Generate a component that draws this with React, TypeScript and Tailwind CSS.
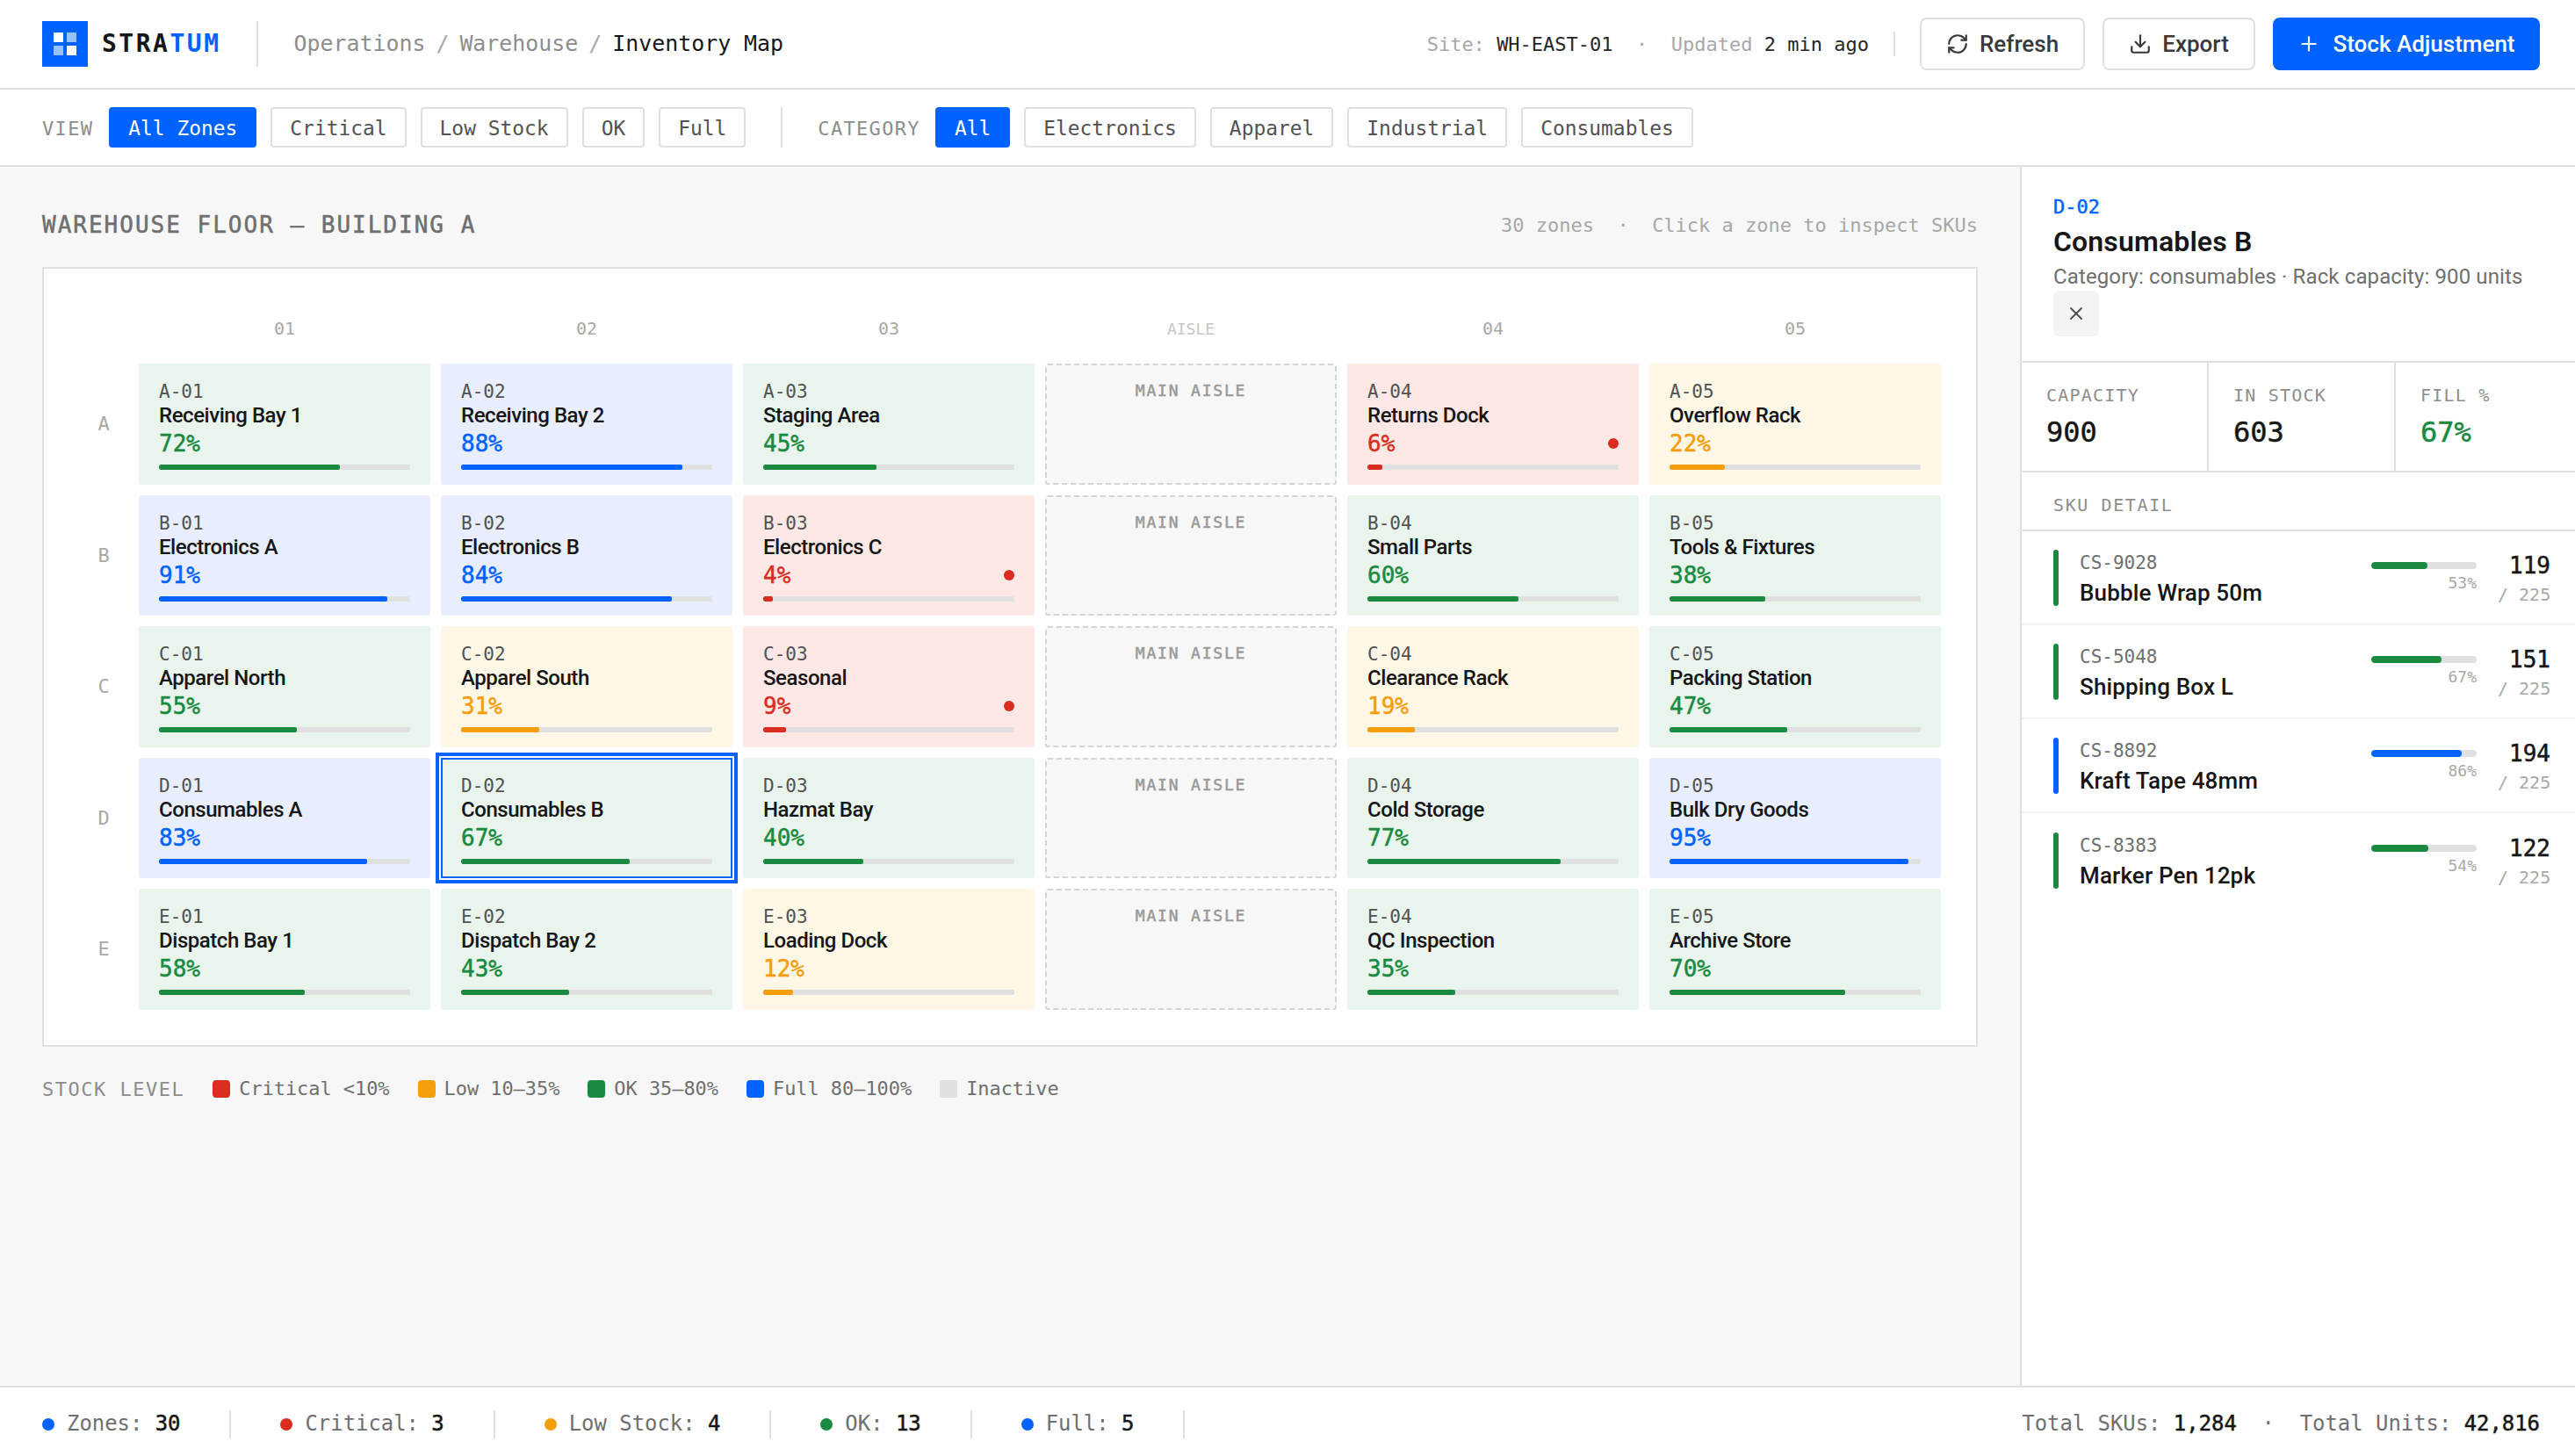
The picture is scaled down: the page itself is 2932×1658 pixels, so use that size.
import { RefreshCw, Download, Plus, X } from 'lucide-react';

type Level = 'critical' | 'low' | 'ok' | 'full';

const levels: Record<Level, { bg: string; text: string; bar: string }> = {
  critical: { bg: 'bg-[#fde8e6]', text: 'text-[#d92d20]', bar: 'bg-[#d92d20]' },
  low: { bg: 'bg-[#fff7e6]', text: 'text-[#f59e0b]', bar: 'bg-[#f59e0b]' },
  ok: { bg: 'bg-[#e8f4ec]', text: 'text-[#1a8a40]', bar: 'bg-[#1a8a40]' },
  full: { bg: 'bg-[#e8eefd]', text: 'text-[#0062ff]', bar: 'bg-[#0062ff]' },
};

const mono = "font-['DejaVu_Sans_Mono',monospace]";
// DejaVu has no medium cut, so thicken the regular one a little
const monoSemi = "font-['DejaVu_Sans_Mono',monospace] [-webkit-text-stroke:0.5px_currentColor]";
const sans = "font-['Roboto',sans-serif]";

const rows: { label: string; zones: [string, number, Level][] }[] = [
  { label: 'A', zones: [['Receiving Bay 1', 72, 'ok'], ['Receiving Bay 2', 88, 'full'], ['Staging Area', 45, 'ok'], ['Returns Dock', 6, 'critical'], ['Overflow Rack', 22, 'low']] },
  { label: 'B', zones: [['Electronics A', 91, 'full'], ['Electronics B', 84, 'full'], ['Electronics C', 4, 'critical'], ['Small Parts', 60, 'ok'], ['Tools & Fixtures', 38, 'ok']] },
  { label: 'C', zones: [['Apparel North', 55, 'ok'], ['Apparel South', 31, 'low'], ['Seasonal', 9, 'critical'], ['Clearance Rack', 19, 'low'], ['Packing Station', 47, 'ok']] },
  { label: 'D', zones: [['Consumables A', 83, 'full'], ['Consumables B', 67, 'ok'], ['Hazmat Bay', 40, 'ok'], ['Cold Storage', 77, 'ok'], ['Bulk Dry Goods', 95, 'full']] },
  { label: 'E', zones: [['Dispatch Bay 1', 58, 'ok'], ['Dispatch Bay 2', 43, 'ok'], ['Loading Dock', 12, 'low'], ['QC Inspection', 35, 'ok'], ['Archive Store', 70, 'ok']] },
];

const skus: [string, string, number, number, Level][] = [
  ['CS-9028', 'Bubble Wrap 50m', 53, 119, 'ok'],
  ['CS-5048', 'Shipping Box L', 67, 151, 'ok'],
  ['CS-8892', 'Kraft Tape 48mm', 86, 194, 'full'],
  ['CS-8383', 'Marker Pen 12pk', 54, 122, 'ok'],
];

function Chip({ label, active }: { label: string; active?: boolean }) {
  return (
    <button
      className={`h-[46px] px-5 pt-[2px] border-2 rounded-[4px] text-[22.9px] ${
        active ? 'bg-[#0062ff] border-[#0062ff] text-white' : 'bg-white border-[#e0e0e0] text-[#525252]'
      }`}
    >
      {label}
    </button>
  );
}

function Zone({ code, name, pct, level }: { code: string; name: string; pct: number; level: Level }) {
  const selected = code === 'D-02';
  return (
    <div
      className={`h-[137.5px] flex flex-col ${levels[level].bg} ${
        selected
          ? 'relative z-10 border-2 border-[#0062ff] px-[21px] pt-[18px] shadow-[0_0_0_2px_#fff,0_0_0_6px_#0062ff]'
          : 'px-[23px] pt-[20px] rounded-[3px]'
      }`}
    >
      <div className={`${mono} text-[21px] leading-[25px] text-[#525252]`}>{code}</div>
      <div className={`${sans} text-[24px] leading-[28px] tracking-[-0.45px] font-medium text-[#161616] whitespace-nowrap`}>{name}</div>
      <div className="mt-[2px] h-[32px] flex items-center justify-between">
        <span className={`${monoSemi} text-[26px] leading-[32px] ${levels[level].text}`}>{pct}%</span>
        {level === 'critical' && <span className="w-3 h-3 rounded-full bg-[#d92d20]" />}
      </div>
      <div className="mt-2 h-[6px] rounded-[2px] bg-[#e0e0e0] overflow-hidden">
        <div className={`h-full rounded-[2px] ${levels[level].bar}`} style={{ width: `${pct}%` }} />
      </div>
    </div>
  );
}

function Aisle() {
  return (
    <div className={`${monoSemi} h-[137.5px] pt-[16px] border-2 border-dashed border-[#d4d4d4] bg-[#f7f7f7] rounded-[3px] text-center text-[18px] leading-[26px] tracking-[1.8px] text-[#999999]`}>
      MAIN AISLE
    </div>
  );
}

function Legend({ swatch, label }: { swatch: string; label: string }) {
  return (
    <div className="flex items-center gap-[10px] text-[21.9px] text-[#6f6f6f]">
      <span className={`w-5 h-5 rounded-[4px] ${swatch}`} />
      <span>{label}</span>
    </div>
  );
}

function FootStat({ dot, label, value }: { dot: string; label: string; value: number }) {
  return (
    <div className="flex items-center">
      <span className={`w-[14px] h-[14px] rounded-full mr-[14px] ${dot}`} />
      <span className="text-[#6f6f6f] whitespace-pre">{label}: </span>
      <span className={`${monoSemi} text-[#161616]`}>{value}</span>
      <span className="w-[2px] h-8 bg-[#e0e0e0] mx-[56px]" />
    </div>
  );
}

export default function App() {
  return (
    <div className={`h-screen w-full flex flex-col overflow-hidden bg-white ${sans} text-[#161616]`}>
      <header className="h-[102px] flex-none flex items-center border-b-2 border-[#e0e0e0] pl-12 pr-10">
        <div className="w-[52px] h-[52px] bg-[#0062ff] flex items-center justify-center">
          <svg width="26" height="26" viewBox="0 0 26 26">
            <rect x="0" y="0" width="11" height="11" fill="#fff" />
            <rect x="15" y="0" width="11" height="11" fill="#fff" fillOpacity="0.6" />
            <rect x="0" y="15" width="11" height="11" fill="#fff" fillOpacity="0.6" />
            <rect x="15" y="15" width="11" height="11" fill="#fff" />
          </svg>
        </div>
        <div className={`${mono} ml-[16px] text-[28px] font-bold tracking-[2.5px]`}>
          STRA<span className="text-[#0062ff]">TUM</span>
        </div>
        <div className="w-[2px] h-[52px] bg-[#e0e0e0] ml-10 mr-[41px]" />
        <div className={`${mono} flex gap-3 text-[24.9px] text-[#8d8d8d]`}>
          <span>Operations</span>
          <span className="text-[#a8a8a8]">/</span>
          <span>Warehouse</span>
          <span className="text-[#a8a8a8]">/</span>
          <span className="text-[#161616]">Inventory Map</span>
        </div>
        <div className={`${mono} ml-auto text-[22px] text-[#a8a8a8] whitespace-pre`}>
          Site: <span className="text-[#262626]">WH-EAST-01</span>
          {'  ·  '}Updated <span className="text-[#262626]">2 min ago</span>
        </div>
        <div className="w-[2px] h-7 bg-[#e0e0e0] ml-7 mr-7" />
        <div className="flex gap-5">
          <button className="h-[60px] w-[188px] flex items-center justify-center gap-[12px] border-2 border-[#e0e0e0] rounded-lg text-[26px] font-medium text-[#393939]">
            <RefreshCw size={26} strokeWidth={2} />
            Refresh
          </button>
          <button className="h-[60px] w-[174px] flex items-center justify-center gap-[12px] border-2 border-[#e0e0e0] rounded-lg text-[26px] font-medium text-[#393939]">
            <Download size={26} strokeWidth={2} />
            Export
          </button>
          <button className="h-[60px] w-[304px] flex items-center justify-center gap-[14px] bg-[#0062ff] rounded-lg text-[26px] font-medium text-white">
            <Plus size={26} strokeWidth={2} />
            Stock Adjustment
          </button>
        </div>
      </header>

      <div className={`${mono} h-[88px] flex-none flex items-center border-b-2 border-[#e0e0e0] pl-12`}>
        <span className="mt-[2px] text-[22px] tracking-[1.32px] text-[#8d8d8d] mr-[18px]">VIEW</span>
        <div className="flex gap-4">
          <Chip label="All Zones" active />
          <Chip label="Critical" />
          <Chip label="Low Stock" />
          <Chip label="OK" />
          <Chip label="Full" />
        </div>
        <div className="w-[2px] h-[46px] bg-[#e0e0e0] mx-10" />
        <span className="mt-[2px] text-[22px] tracking-[1.32px] text-[#8d8d8d] mr-[17px]">CATEGORY</span>
        <div className="flex gap-4">
          <Chip label="All" active />
          <Chip label="Electronics" />
          <Chip label="Apparel" />
          <Chip label="Industrial" />
          <Chip label="Consumables" />
        </div>
      </div>

      <div className="flex-1 flex min-h-0">
        <main className={`${mono} flex-1 bg-[#f7f7f7] px-12 pt-12`}>
          <div className="h-9 mb-[30px] flex items-center justify-between">
            <div className={`${monoSemi} text-[26px] tracking-[2px] text-[#6f6f6f]`}>WAREHOUSE FLOOR — BUILDING A</div>
            <div className="text-[22px] text-[#a8a8a8] whitespace-pre">30 zones{'  ·  '}Click a zone to inspect SKUs</div>
          </div>

          <div className="bg-white border-2 border-[#e0e0e0] p-10">
            <div className="grid grid-cols-[56px_repeat(6,minmax(0,1fr))] gap-3">
              <div className="h-14" />
              {['01', '02', '03', 'AISLE', '04', '05'].map((c) => (
                <div
                  key={c}
                  className={`h-14 flex items-center justify-center ${
                    c === 'AISLE' ? 'text-[18px] text-[#c6c6c6]' : 'text-[20px] text-[#a8a8a8]'
                  }`}
                >
                  {c}
                </div>
              ))}
              {rows.map((r) => (
                <div key={r.label} className="contents">
                  <div className="flex items-center justify-center text-[22px] text-[#a8a8a8]">{r.label}</div>
                  {r.zones.flatMap((z, i) => {
                    const code = `${r.label}-0${i + 1}`;
                    const cell = <Zone key={code} code={code} name={z[0]} pct={z[1]} level={z[2]} />;
                    return i === 2 ? [cell, <Aisle key={`${r.label}-aisle`} />] : [cell];
                  })}
                </div>
              ))}
            </div>
          </div>

          <div className="mt-[32px] flex items-center gap-8">
            <span className="text-[22px] tracking-[1.5px] text-[#8d8d8d]">STOCK LEVEL</span>
            <Legend swatch="bg-[#d92d20]" label="Critical <10%" />
            <Legend swatch="bg-[#f59e0b]" label="Low 10–35%" />
            <Legend swatch="bg-[#1a8a40]" label="OK 35–80%" />
            <Legend swatch="bg-[#0062ff]" label="Full 80–100%" />
            <Legend swatch="bg-[#e0e0e0]" label="Inactive" />
          </div>
        </main>

        <aside className="w-[632px] flex-none border-l-2 border-[#e0e0e0] bg-white overflow-hidden">
          <div className="h-[223px] px-9 pt-[32px] border-b-2 border-[#e0e0e0]">
            <div className={`${monoSemi} text-[22px] leading-[28px] text-[#0062ff]`}>D-02</div>
            <div className="mt-[5px] text-[32px] leading-[40px] font-semibold tracking-[0.15px]">Consumables B</div>
            <div className="mt-1 text-[24px] leading-[32px] tracking-[0.12px] text-[#6f6f6f] whitespace-nowrap">Category: consumables · Rack capacity: 900 units</div>
            <button className="w-[52px] h-[52px] flex items-center justify-center bg-[#f4f4f4] rounded-md text-[#525252]">
              <X size={24} strokeWidth={2} />
            </button>
          </div>

          <div className={`${mono} h-[125px] flex border-b-2 border-[#e0e0e0]`}>
            {[
              ['CAPACITY', '900', 'text-[#161616]', 'border-r-2'],
              ['IN STOCK', '603', 'text-[#161616]', 'border-r-2'],
              ['FILL %', '67%', 'text-[#1a8a40]', ''],
            ].map(([label, value, color, border]) => (
              <div key={label} className={`w-[213px] flex-none pl-7 pt-[25px] border-[#e0e0e0] ${border}`}>
                <div className="text-[20px] leading-[24px] tracking-[1.2px] text-[#8d8d8d]">{label}</div>
                <div className={`${monoSemi} mt-[10px] text-[32px] leading-[40px] ${color}`}>{value}</div>
              </div>
            ))}
          </div>

          <div className={`${mono} h-[67px] pl-9 pt-2 flex items-center border-b-2 border-[#e0e0e0] text-[20px] tracking-[1.6px] text-[#8d8d8d]`}>
            SKU DETAIL
          </div>

          {skus.map(([code, name, pct, qty, level], i) => (
            <div key={code} className={`h-[107px] pl-9 pr-7 flex items-center ${i < skus.length - 1 ? 'border-b-2 border-[#f4f4f4]' : ''}`}>
              <span className={`w-[6px] h-16 rounded-full ${levels[level].bar}`} />
              <div className="ml-6 mt-[3px] flex-1">
                <div className={`${mono} text-[21px] leading-[26px] text-[#6f6f6f]`}>{code}</div>
                <div className="mt-[5px] text-[26px] leading-[32px] tracking-[0.15px] font-medium whitespace-nowrap">{name}</div>
              </div>
              <div className="w-[120px] flex-none">
                <div className="h-2 rounded-full bg-[#e0e0e0] overflow-hidden">
                  <div className={`h-full rounded-full ${levels[level].bar}`} style={{ width: `${pct}%` }} />
                </div>
                <div className={`${mono} mt-1 text-right text-[18px] leading-[24px] text-[#a8a8a8]`}>{pct}%</div>
              </div>
              <div className="w-[60px] ml-6 mt-[3px] flex-none text-right">
                <div className={`${monoSemi} text-[26px] leading-[32px]`}>{qty}</div>
                <div className={`${mono} mt-1 text-[20px] leading-[26px] text-[#a8a8a8] whitespace-pre`}>/ 225</div>
              </div>
            </div>
          ))}
        </aside>
      </div>

      <footer className={`${mono} h-[80px] flex-none flex items-center border-t-2 border-[#e0e0e0] pl-12 pr-10 pt-[6px] text-[23.9px]`}>
        <FootStat dot="bg-[#0062ff]" label="Zones" value={30} />
        <FootStat dot="bg-[#d92d20]" label="Critical" value={3} />
        <FootStat dot="bg-[#f59e0b]" label="Low Stock" value={4} />
        <FootStat dot="bg-[#1a8a40]" label="OK" value={13} />
        <FootStat dot="bg-[#0062ff]" label="Full" value={5} />
        <div className="ml-auto text-[#6f6f6f] whitespace-pre">
          Total SKUs: <span className={`${monoSemi} text-[#161616]`}>1,284</span>
          {'  ·  '}Total Units: <span className={`${monoSemi} text-[#161616]`}>42,816</span>
        </div>
      </footer>
    </div>
  );
}
